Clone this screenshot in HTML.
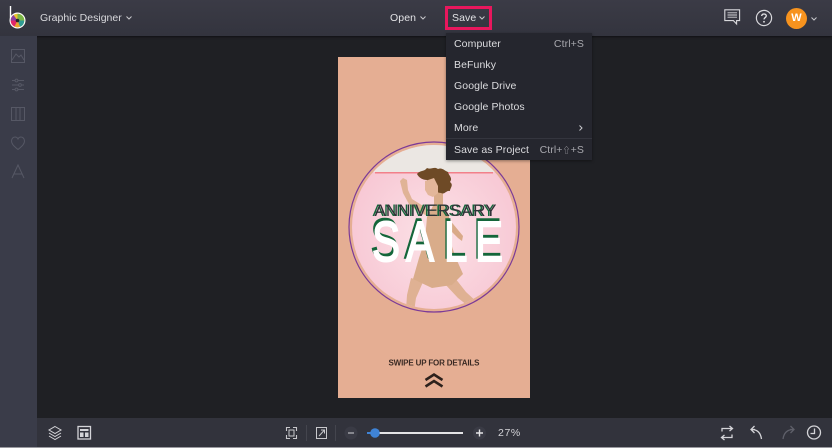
<!DOCTYPE html>
<html>
<head>
<meta charset="utf-8">
<style>
html,body{margin:0;padding:0;width:832px;height:448px;overflow:hidden;background:#1f2024;font-family:"Liberation Sans","Noto Sans CJK SC",sans-serif;color:#dcdcdf}
div{position:absolute;box-sizing:border-box}
svg{position:absolute;overflow:visible}
.t{white-space:nowrap;font-size:10.5px;letter-spacing:.1px;line-height:14px}
#top{left:0;top:0;width:832px;height:36px;background:linear-gradient(#3b3b46,#33343e);box-shadow:0 1px 2px rgba(0,0,0,.5)}
#side{left:0;top:36px;width:37px;height:412px;background:#3a3c49}
#bot{left:37px;top:418px;width:795px;height:29px;background:#32333c}
#line{left:0;top:447px;width:832px;height:1px;background:#9a9aa0}
#art{left:338px;top:57px;width:192px;height:341px;background:#e5ae93}
#menu{left:446px;top:33px;width:146px;height:127px;background:#25262e;box-shadow:0 1px 3px rgba(0,0,0,.4)}
#menu .t{color:#dcdcdf;left:8px}
#menu .r{left:auto;right:8px;color:#a8a8ae}
#save{left:445px;top:6px;width:47px;height:24px;border:3px solid #e8175d}
</style>
</head>
<body>
<div id="top"></div>
<div id="side"></div>
<div id="bot"></div>
<div id="line"></div>

<!-- logo -->
<svg style="left:0;top:0" width="37" height="36" viewBox="0 0 37 36">
<path d="M10.500 6V21" stroke="#fff" stroke-width="1.400" fill="none"/>
<circle cx="17.500" cy="20.500" r="8" fill="#fff"/>
<circle cx="17.500" cy="20.500" r="6.800" fill="#e9c32e"/>
<path d="M17.500 20.500L17.500 13.700A6.800 6.800 0 0 1 24.300 20.500Z" fill="#7ab648"/>
<path d="M17.500 20.500L24.300 20.500A6.800 6.800 0 0 1 20 26.800Z" fill="#2f9c95"/>
<path d="M17.500 20.500L20 26.800A6.800 6.800 0 0 1 14.500 26.600Z" fill="#e9a52e"/>
<path d="M17.500 20.500L14.500 26.600A6.800 6.800 0 0 1 10.700 20.500Z" fill="#e0266a"/>
<path d="M17.500 20.500L10.700 20.500A6.800 6.800 0 0 1 13.500 15Z" fill="#8a3fa0"/>
<circle cx="17.500" cy="20.500" r="1.800" fill="#24242a"/>
</svg>
<div class="t" style="left:40px;top:11px;color:#d8d8dc;letter-spacing:0">Graphic Designer</div>
<svg style="left:126px;top:16px" width="6" height="4"><path d="M.5.5L3 3 5.500.5" stroke="#c8c8cc" fill="none"/></svg>

<div class="t" style="left:390px;top:11px;color:#e2e2e5">Open</div>
<svg style="left:420px;top:16px" width="6" height="4"><path d="M.5.5L3 3 5.500.5" stroke="#c8c8cc" fill="none"/></svg>
<div class="t" style="left:452px;top:11px;color:#e2e2e5">Save</div>
<svg style="left:479px;top:16px" width="6" height="4"><path d="M.5.5L3 3 5.500.5" stroke="#c8c8cc" fill="none"/></svg>
<div id="save"></div>

<!-- top right -->
<svg style="left:724px;top:9px" width="17" height="17" viewBox="0 0 17 17" fill="none" stroke="#d8d8dc" stroke-width="1.100">
<path d="M.8.8H15.600V11.600H12.600V15L9.400 11.600H.8Z"/><path d="M3.500 3.800H13M3.500 6H13M3.500 8.200H13" stroke-width=".9"/>
</svg>
<svg style="left:755px;top:9px" width="18" height="18" viewBox="0 0 18 18" fill="none">
<circle cx="9" cy="9" r="7.600" stroke="#d8d8dc" stroke-width="1.200"/>
<path d="M6.700 7C6.800 5.600 7.800 5 9 5c1.300 0 2.300.8 2.300 1.900 0 1.700-2.300 1.600-2.300 3.500" stroke="#e4e4e6" stroke-width="1.300"/>
<circle cx="9" cy="12.800" r=".9" fill="#e4e4e6"/>
</svg>
<div style="left:786px;top:8px;width:21px;height:21px;border-radius:50%;background:#f7931e;color:#fff;font-size:11px;font-weight:bold;text-align:center;line-height:21px">W</div>
<svg style="left:811px;top:17px" width="6" height="4"><path d="M.5.5L3 3 5.500.5" stroke="#c8c8cc" fill="none"/></svg>

<!-- side icons -->
<svg style="left:0;top:36px" width="37" height="150" viewBox="0 36 37 150" fill="none" stroke="#565865" stroke-width="1">
<rect x="11.500" y="49.500" width="13" height="13"/>
<path d="M12 60L16 54 19 57 21 55 24 60"/>
<path d="M12 80.500H24M12 85H24M12 89.500H24"/>
<circle cx="16.500" cy="80.500" r="1.400" fill="#3a3c49"/><circle cx="20" cy="85" r="1.400" fill="#3a3c49"/><circle cx="16.500" cy="89.500" r="1.400" fill="#3a3c49"/>
<rect x="11.500" y="107.500" width="13" height="13"/><path d="M16 107.500V120.500M20 107.500V120.500"/>
<path d="M18 149.500C13 145.500 11.500 143.500 11.500 141 11.500 138.600 13.200 137 15 137 16.300 137 17.400 137.700 18 139 18.600 137.700 19.700 137 21 137 22.800 137 24.500 138.600 24.500 141 24.500 143.500 23 145.500 18 149.500Z"/>
<path d="M12 178L18 165 24 178M14 174H22"/>
</svg>

<!-- artboard -->
<div id="art"></div>
<svg style="left:338px;top:57px" width="192" height="341" viewBox="338 57 192 341">
<defs>
<clipPath id="c"><circle cx="434" cy="227" r="82"/></clipPath>
<radialGradient id="pk" cx=".5" cy=".55" r=".55"><stop offset="0" stop-color="#fce2e7"/><stop offset="1" stop-color="#f7c6d3"/></radialGradient>
</defs>
<circle cx="434" cy="227" r="85" fill="none" stroke="#7b3a98" stroke-width="1.200"/>
<g clip-path="url(#c)">
<rect x="350" y="140" width="170" height="175" fill="url(#pk)"/>
<rect x="350" y="140" width="170" height="32" fill="#ebe7e3"/>
<rect x="375" y="172" width="118" height="1.500" fill="#f2808a"/>
<!-- arms and legs -->
<path d="M400 181L403 178 407 180 408 190 412 199 428 209 427 216 410 206 403 193Z" fill="#e0b396"/>
<path d="M449 219L463 236 462 241 458 238 446 226Z" fill="#d9aa88"/>
<path d="M411 278L423 282 416 298 414 312 406 310 407 295Z" fill="#dfb193"/>
<path d="M443 282L455 278 466 292 478 303 472 309 458 298Z" fill="#dfb193"/>
<!-- neck and dress -->
<path d="M434 192L443 192 443 204 449 216 450 240 455 256 463 274 452 285 432 288 413 279 419 258 425 240 427 217 434 204Z" fill="#d9ac8a"/>
<!-- hair -->
<path d="M417 174C420 170 424 172 427 168 431 170 434 166 438 169 442 167 445 171 448 172 449 176 453 178 450 182 454 185 450 188 450 191 446 190 445 195 441 193 436 193 430 186 427 180 423 180 419 178 417 174Z" fill="#6e4a26"/>
<!-- face -->
<path d="M425 181L434 178 438 186 438 193 433 197 428 195 425 190Z" fill="#e3b69a"/>
</g>
<!-- ANNIVERSARY -->
<text x="372.500" y="216" font-family="'Liberation Sans',sans-serif" font-size="17" fill="#14663a" textLength="122" lengthAdjust="spacingAndGlyphs">ANNIVERSARY</text>
<text x="374.500" y="216" font-family="'Liberation Sans',sans-serif" font-size="17" fill="#2f3137" textLength="122" lengthAdjust="spacingAndGlyphs">ANNIVERSARY</text>
<!-- SALE -->
<text transform="translate(-1.500,258) scale(1,1.340)" x="372 406 444 475" y="0" font-family="'Liberation Sans',sans-serif" font-size="42" fill="#14663a" stroke="#14663a" stroke-width="1.200">SALE</text>
<text transform="translate(0,261) scale(1,1.340)" x="372 406 444 475" y="0" font-family="'Liberation Sans',sans-serif" font-size="42" fill="#fff" stroke="#fff" stroke-width="1.400">SALE</text>
<text x="388.500" y="365.500" font-family="'Liberation Sans',sans-serif" font-size="8" font-weight="bold" fill="#3a2a24" textLength="91" lengthAdjust="spacing">SWIPE UP FOR DETAILS</text>
<path d="M425.500 380L434 374.500 442.500 380M425.500 386.500L434 381 442.500 386.500" fill="none" stroke="#2d211c" stroke-width="2.600"/>
</svg>

<!-- menu -->
<div id="menu">
<div class="t" style="top:4px">Computer</div><div class="t r" style="top:4px">Ctrl+S</div>
<div class="t" style="top:25px">BeFunky</div>
<div class="t" style="top:46px">Google Drive</div>
<div class="t" style="top:67px">Google Photos</div>
<div class="t" style="top:88px">More</div>
<svg style="left:133px;top:92px" width="4" height="6"><path d="M.5.5L3 3 .5 5.500" stroke="#c8c8cc" fill="none"/></svg>
<div style="left:0;top:105px;width:146px;height:1px;background:#34353e"></div>
<div class="t" style="top:110px">Save as Project</div><div class="t r" style="top:110px">Ctrl+<span style="font-size:8px">⇧</span>+S</div>
</div>

<!-- bottom left -->
<svg style="left:47px;top:425px" width="46" height="16" viewBox="47 425 46 16" fill="none" stroke="#d4d4d8" stroke-width="1">
<path d="M55 426.500L61 430 55 433.500 49 430Z"/><path d="M49 433L55 436.500 61 433M49 436L55 439.500 61 436"/>
<rect x="78" y="426.500" width="12.500" height="12.500" stroke-width="1.300"/>
<rect x="80" y="429" width="8.500" height="2" fill="#d4d4d8" stroke="none"/>
<rect x="80" y="432.500" width="3.500" height="4.500" fill="#d4d4d8" stroke="none"/><rect x="85" y="432.500" width="3.500" height="4.500" fill="#d4d4d8" stroke="none"/>
</svg>

<!-- bottom centre -->
<svg style="left:284px;top:424px" width="210" height="18" viewBox="284 424 210 18" fill="none">
<path d="M286.500 431V427.500H290M293 427.500H296.500V431M296.500 435V438.500H293M290 438.500H286.500V435" stroke="#c8c8cc" stroke-width="1.100"/>
<rect x="289" y="430" width="5" height="6" stroke="#c8c8cc"/>
<path d="M306.500 425V441" stroke="#44454e"/>
<rect x="316.500" y="427.500" width="10" height="11" stroke="#c8c8cc"/>
<path d="M319 436L324.500 430M321 430H324.500V433.500" stroke="#c8c8cc"/>
<path d="M335.500 425V441" stroke="#44454e"/>
<circle cx="351" cy="433" r="6.500" fill="#3a3b45"/>
<path d="M348 433H354" stroke="#a8a8ae" stroke-width="1.400"/>
<rect x="367" y="432" width="96" height="2" fill="#e4e4e6"/>
<rect x="367" y="432" width="7" height="2" fill="#3f83d6"/>
<circle cx="375" cy="433" r="4.800" fill="#3f83d6"/>
<circle cx="479.500" cy="433" r="6.500" fill="#3a3b45"/>
<path d="M476 433H483M479.500 429.500V436.500" stroke="#e4e4e6" stroke-width="1.400"/>
</svg>
<div class="t" style="left:498px;top:426px;color:#d4d4d8;font-size:10.500px;letter-spacing:.6px">27%</div>

<!-- bottom right -->
<svg style="left:718px;top:424px" width="106" height="18" viewBox="718 424 106 18" fill="none" stroke="#d4d4d8" stroke-width="1.300">
<path d="M722 431.500V428.500H732M729.500 426L732.500 428.500 729.500 431"/>
<path d="M732 434.500V437.500H722M724.500 435L721.500 437.500 724.500 440"/>
<path d="M755 429.500L751 429.500M754.500 426L751 429.500 754.500 433M751.500 429.500C757 429.500 760.500 432 761.500 439"/>
<path d="M790 429.500H794M790.500 426L794 429.500 790.500 433M793.500 429.500C788 429.500 784 432 783 439" stroke="#5f606a"/>
<circle cx="814" cy="432.500" r="6.500"/>
<path d="M814.500 428.500V433.500H810.500"/>
</svg>
</body>
</html>
